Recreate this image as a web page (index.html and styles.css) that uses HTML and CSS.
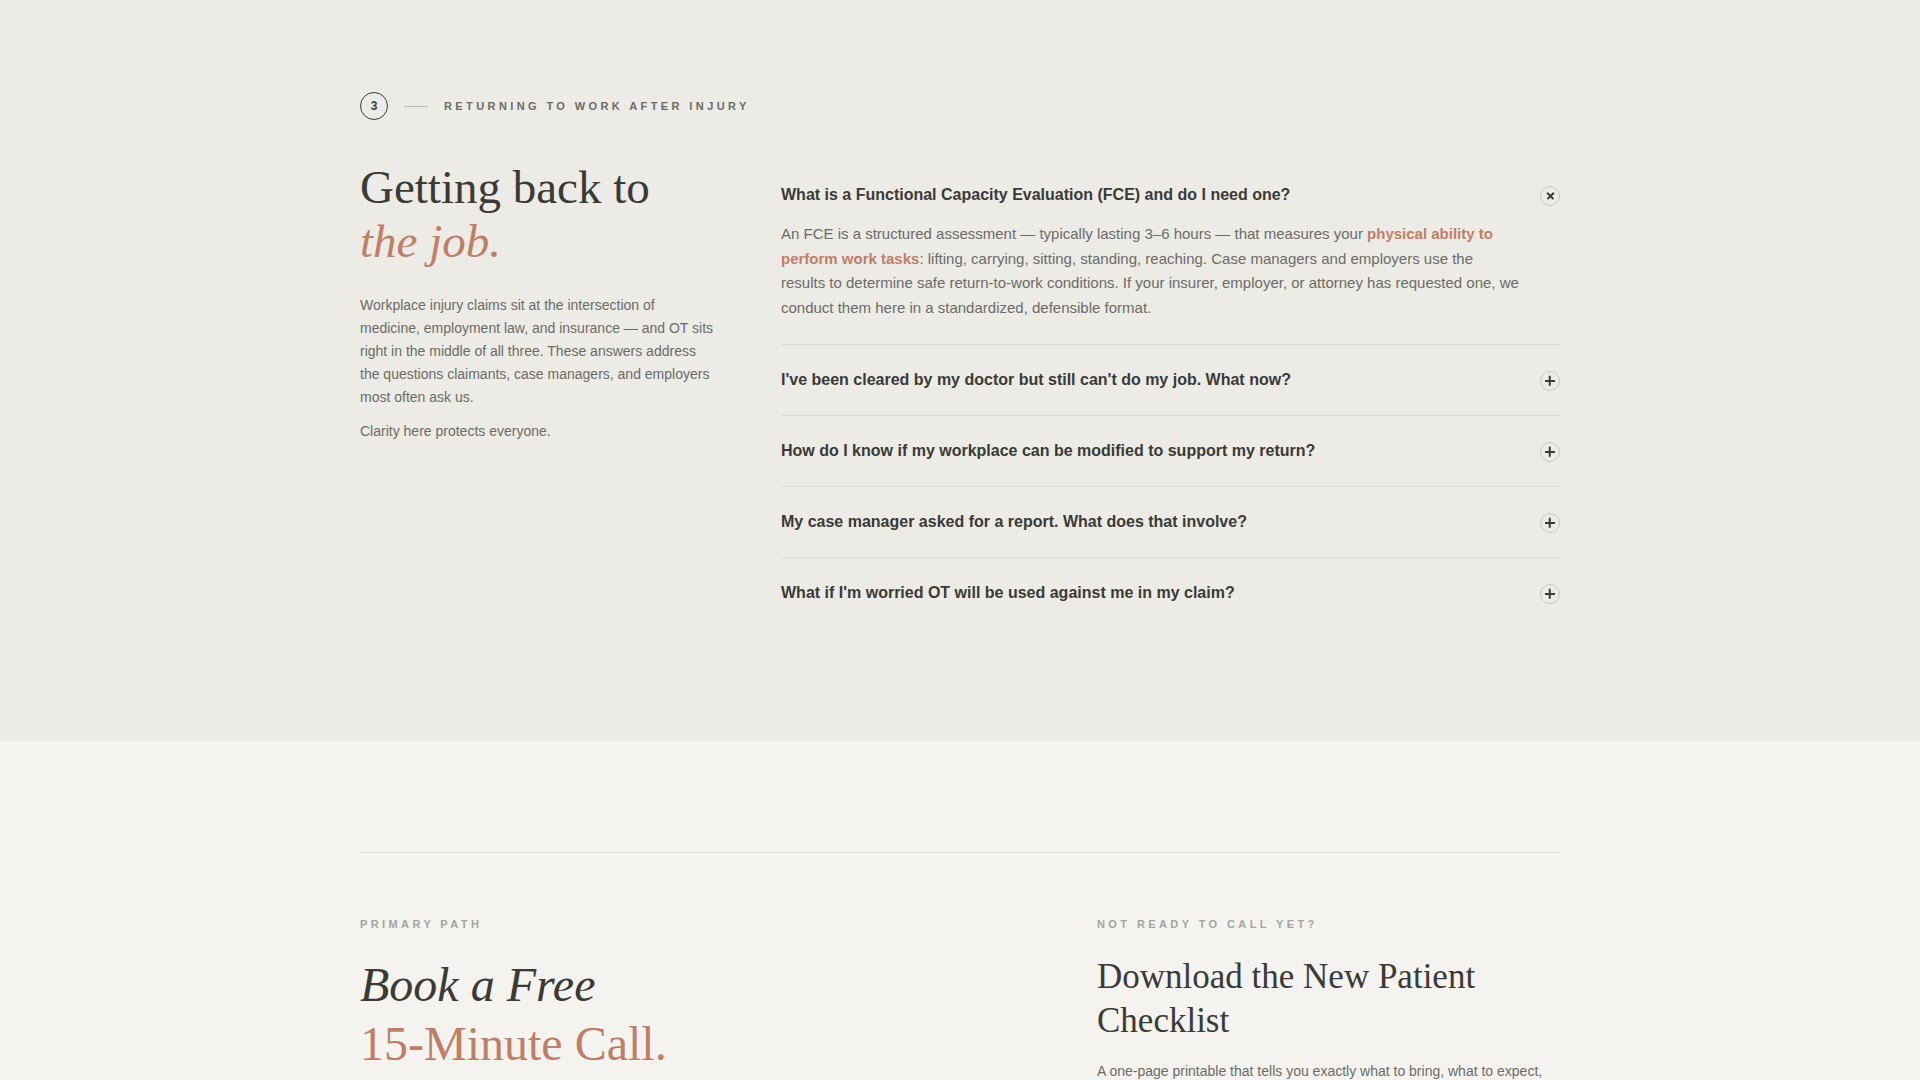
FILE: index.html
```html
<!DOCTYPE html>
<html lang="en">
<head>
    <meta charset="UTF-8">
    <meta name="viewport" content="width=device-width, initial-scale=1.0">
    <title>Returning to Work After Injury</title>
    <link rel="stylesheet" href="styles.css">
</head>
<body>
    <section class="faq-section">
        <div class="container">
            <div class="step">
                <span class="step-num">3</span>
                <span class="step-line"></span>
                <span class="step-label">Returning to work after injury</span>
            </div>

            <div class="faq-grid">
                <div class="intro">
                    <h2 class="title">Getting back to<br><em>the job.</em></h2>
                    <p>Workplace injury claims sit at the intersection of medicine, employment law, and insurance — and OT sits right in the middle of all three. These answers address the questions claimants, case managers, and employers most often ask us.</p>
                    <p>Clarity here protects everyone.</p>
                </div>

                <div class="faq-list">
                    <div class="faq-item open">
                        <div class="question">
                            <span>What is a Functional Capacity Evaluation (FCE) and do I need one?</span>
                            <span class="toggle"></span>
                        </div>
                        <p class="answer">An FCE is a structured assessment — typically lasting 3–6 hours — that measures your <strong>physical ability to perform work tasks</strong>: lifting, carrying, sitting, standing, reaching. Case managers and employers use the results to determine safe return-to-work conditions. If your insurer, employer, or attorney has requested one, we conduct them here in a standardized, defensible format.</p>
                    </div>
                    <div class="faq-item">
                        <div class="question">
                            <span>I've been cleared by my doctor but still can't do my job. What now?</span>
                            <span class="toggle"></span>
                        </div>
                    </div>
                    <div class="faq-item">
                        <div class="question">
                            <span>How do I know if my workplace can be modified to support my return?</span>
                            <span class="toggle"></span>
                        </div>
                    </div>
                    <div class="faq-item">
                        <div class="question">
                            <span>My case manager asked for a report. What does that involve?</span>
                            <span class="toggle"></span>
                        </div>
                    </div>
                    <div class="faq-item">
                        <div class="question">
                            <span>What if I'm worried OT will be used against me in my claim?</span>
                            <span class="toggle"></span>
                        </div>
                    </div>
                </div>
            </div>
        </div>
    </section>

    <section class="cta-section">
        <div class="container">
            <div class="cta-grid">
                <div class="cta-main">
                    <div class="eyebrow">Primary path</div>
                    <h2 class="cta-title"><em>Book a Free</em><br><span>15-Minute Call.</span></h2>
                </div>
                <div class="cta-side">
                    <div class="eyebrow">Not ready to call yet?</div>
                    <h3 class="side-title">Download the New Patient Checklist</h3>
                    <p>A one-page printable that tells you exactly what to bring, what to expect, and how to get the most out of your first visit.</p>
                </div>
            </div>
        </div>
    </section>
</body>
</html>
```

FILE: styles.css
```css
body {
    margin: 0;
    font-family: "Liberation Sans", Arial, sans-serif;
    color: #3a3a36;
    background: #f4f3ef;
}
.container {
    width: 1200px;
    margin: 0 auto;
}

/* faq section */
.faq-section {
    background: #ecebe6;
    padding: 92px 0 113px;
}
.step {
    display: flex;
    align-items: center;
    gap: 16px;
    margin-bottom: 40px;
}
.step-num {
    width: 26px;
    height: 26px;
    border: 1px solid #3a3a36;
    border-radius: 50%;
    display: flex;
    align-items: center;
    justify-content: center;
    font-size: 12px;
    font-weight: bold;
}
.step-line {
    width: 24px;
    height: 1px;
    background: #b9b8b2;
}
.step-label {
    font-size: 11px;
    font-weight: bold;
    letter-spacing: 3.4px;
    text-transform: uppercase;
    color: #6b6b66;
}
.faq-grid {
    display: grid;
    grid-template-columns: 361px 1fr;
    gap: 60px;
    align-items: start;
}
.title {
    font-family: "Liberation Serif", "Times New Roman", serif;
    font-weight: normal;
    font-size: 47px;
    line-height: 54px;
    margin: 0 0 26px;
    color: #3a3a36;
}
.title em {
    color: #c07e67;
}
.intro p {
    font-size: 14px;
    line-height: 23px;
    color: #6b6b66;
    margin: 0 0 11px;
    max-width: 356px;
}
.faq-item {
    border-top: 1px solid #dcdbd5;
    padding: 24px 0;
}
.faq-item:first-child {
    border-top: none;
}
.question {
    display: flex;
    justify-content: space-between;
    align-items: center;
    font-size: 16px;
    font-weight: bold;
    line-height: 22px;
    color: #3a3a36;
}
.toggle {
    position: relative;
    width: 18px;
    height: 18px;
    border: 1px solid #c9c8c2;
    border-radius: 50%;
    flex-shrink: 0;
    margin-top: 2px;
}
.toggle::before,
.toggle::after {
    content: "";
    position: absolute;
    left: 4px;
    top: 8px;
    width: 10px;
    height: 1.5px;
    background: #3a3a36;
}
.toggle::after {
    transform: rotate(90deg);
}
.open .toggle::before,
.open .toggle::after {
    left: 4.5px;
    width: 9px;
    height: 1.5px;
}
.open .toggle::before {
    transform: rotate(45deg);
}
.open .toggle::after {
    transform: rotate(-45deg);
}
.answer {
    margin: 16px 0 0;
    padding-right: 40px;
    font-size: 15px;
    line-height: 24.5px;
    color: #6b6b66;
}
.answer strong {
    color: #c07e67;
}

/* cta section */
.cta-section {
    padding-top: 111px;
}
.cta-grid {
    border-top: 1px solid #e1dfd9;
    padding-top: 63px;
    display: grid;
    grid-template-columns: 1fr 463px;
    gap: 80px;
}
.eyebrow {
    font-size: 11px;
    font-weight: bold;
    letter-spacing: 3.4px;
    text-transform: uppercase;
    color: #a2a69e;
    line-height: 16px;
}
.cta-title {
    font-family: "Liberation Serif", "Times New Roman", serif;
    font-weight: normal;
    font-size: 48px;
    line-height: 59px;
    margin: 23px 0 0;
    color: #3a3a36;
}
.cta-title span {
    color: #c07e67;
}
.side-title {
    font-family: "Liberation Serif", "Times New Roman", serif;
    font-weight: normal;
    font-size: 35px;
    line-height: 44px;
    margin: 23px 0 17px;
    color: #3a3a36;
}
.cta-side p {
    font-size: 14px;
    line-height: 23px;
    color: #6b6b66;
    margin: 0;
}
```
